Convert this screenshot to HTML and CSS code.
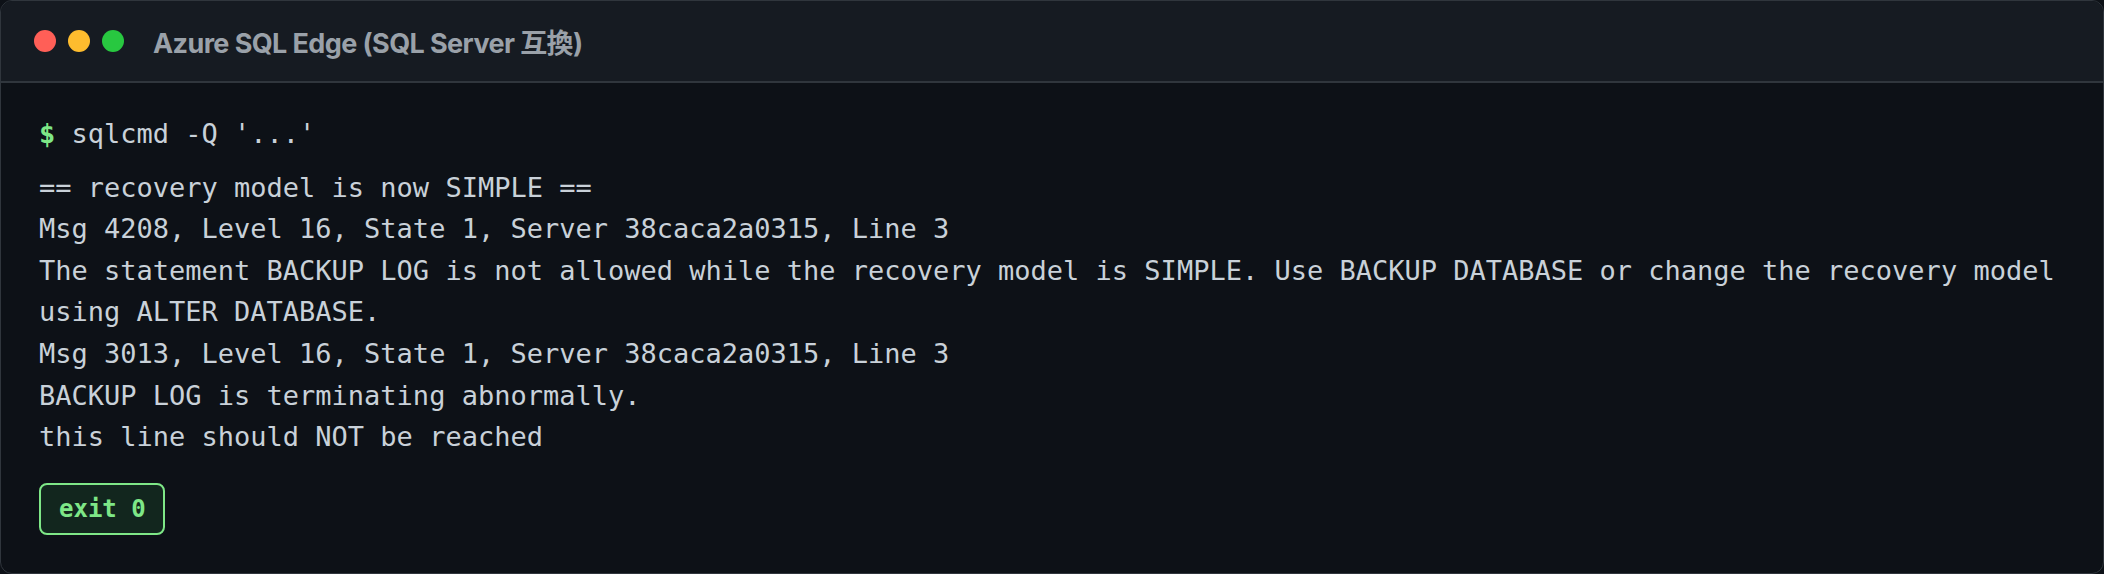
FILE: index.html
```html
<!DOCTYPE html>
<html lang="ja">
<head>
<meta charset="utf-8">
<title>Azure SQL Edge (SQL Server 互換)</title>
<link rel="stylesheet" href="styles.css">
</head>
<body>
<div class="window">
  <div class="titlebar">
    <div class="dots">
      <span class="dot dot-red"></span>
      <span class="dot dot-yellow"></span>
      <span class="dot dot-green"></span>
    </div>
    <div class="title">Azure SQL Edge (SQL Server 互換)</div>
  </div>
  <div class="term">
    <div class="cmd"><span class="prompt">$</span> sqlcmd -Q '...'</div>
    <div class="output">
      <div class="line">== recovery model is now SIMPLE ==</div>
      <div class="line">Msg 4208, Level 16, State 1, Server 38caca2a0315, Line 3</div>
      <div class="line">The statement BACKUP LOG is not allowed while the recovery model is SIMPLE. Use BACKUP DATABASE or change the recovery model using ALTER DATABASE.</div>
      <div class="line">Msg 3013, Level 16, State 1, Server 38caca2a0315, Line 3</div>
      <div class="line">BACKUP LOG is terminating abnormally.</div>
      <div class="line">this line should NOT be reached</div>
    </div>
    <div class="status"><span class="badge">exit 0</span></div>
  </div>
</div>
</body>
</html>
```

FILE: styles.css
```css
* { box-sizing: border-box; }
html, body { margin: 0; padding: 0; background: #0d1117; }
.window {
  width: 2104px;
  height: 574px;
  border: 1px solid #30363d;
  border-radius: 12px;
  overflow: hidden;
  background: #0d1117;
  display: flex;
  flex-direction: column;
}
.titlebar {
  height: 82px;
  flex: none;
  background: #161b22;
  border-bottom: 2px solid #30363d;
  display: flex;
  align-items: center;
  padding-left: 33px;
}
.dots { display: flex; gap: 12px; }
.dot { width: 22px; height: 22px; border-radius: 50%; display: block; }
.dot-red { background: #ff5f57; }
.dot-yellow { background: #febc2e; }
.dot-green { background: #28c840; }
.title {
  margin-left: 29px;
  font-family: Inter, "Noto Sans CJK JP", sans-serif;
  font-weight: 700;
  font-size: 27px;
  color: #9aa1a9;
  letter-spacing: -0.6px;
}
.term {
  padding: 30px 38px 0 38px;
  font-family: "DejaVu Sans Mono", monospace;
  font-size: 27px;
  line-height: 41.6px;
  color: #c9d1d9;
}
.prompt { color: #7ee787; font-weight: 700; }
.output { margin-top: 12px; }
.line { white-space: pre-wrap; }
.status { margin-top: 25px; }
.badge {
  display: inline-block;
  height: 52px;
  line-height: 48px;
  padding: 0 17px 0 18px;
  border: 2px solid #7ee787;
  border-radius: 8px;
  background: #12261e;
  color: #7ee787;
  font-weight: 700;
  font-size: 24px;
}
```
